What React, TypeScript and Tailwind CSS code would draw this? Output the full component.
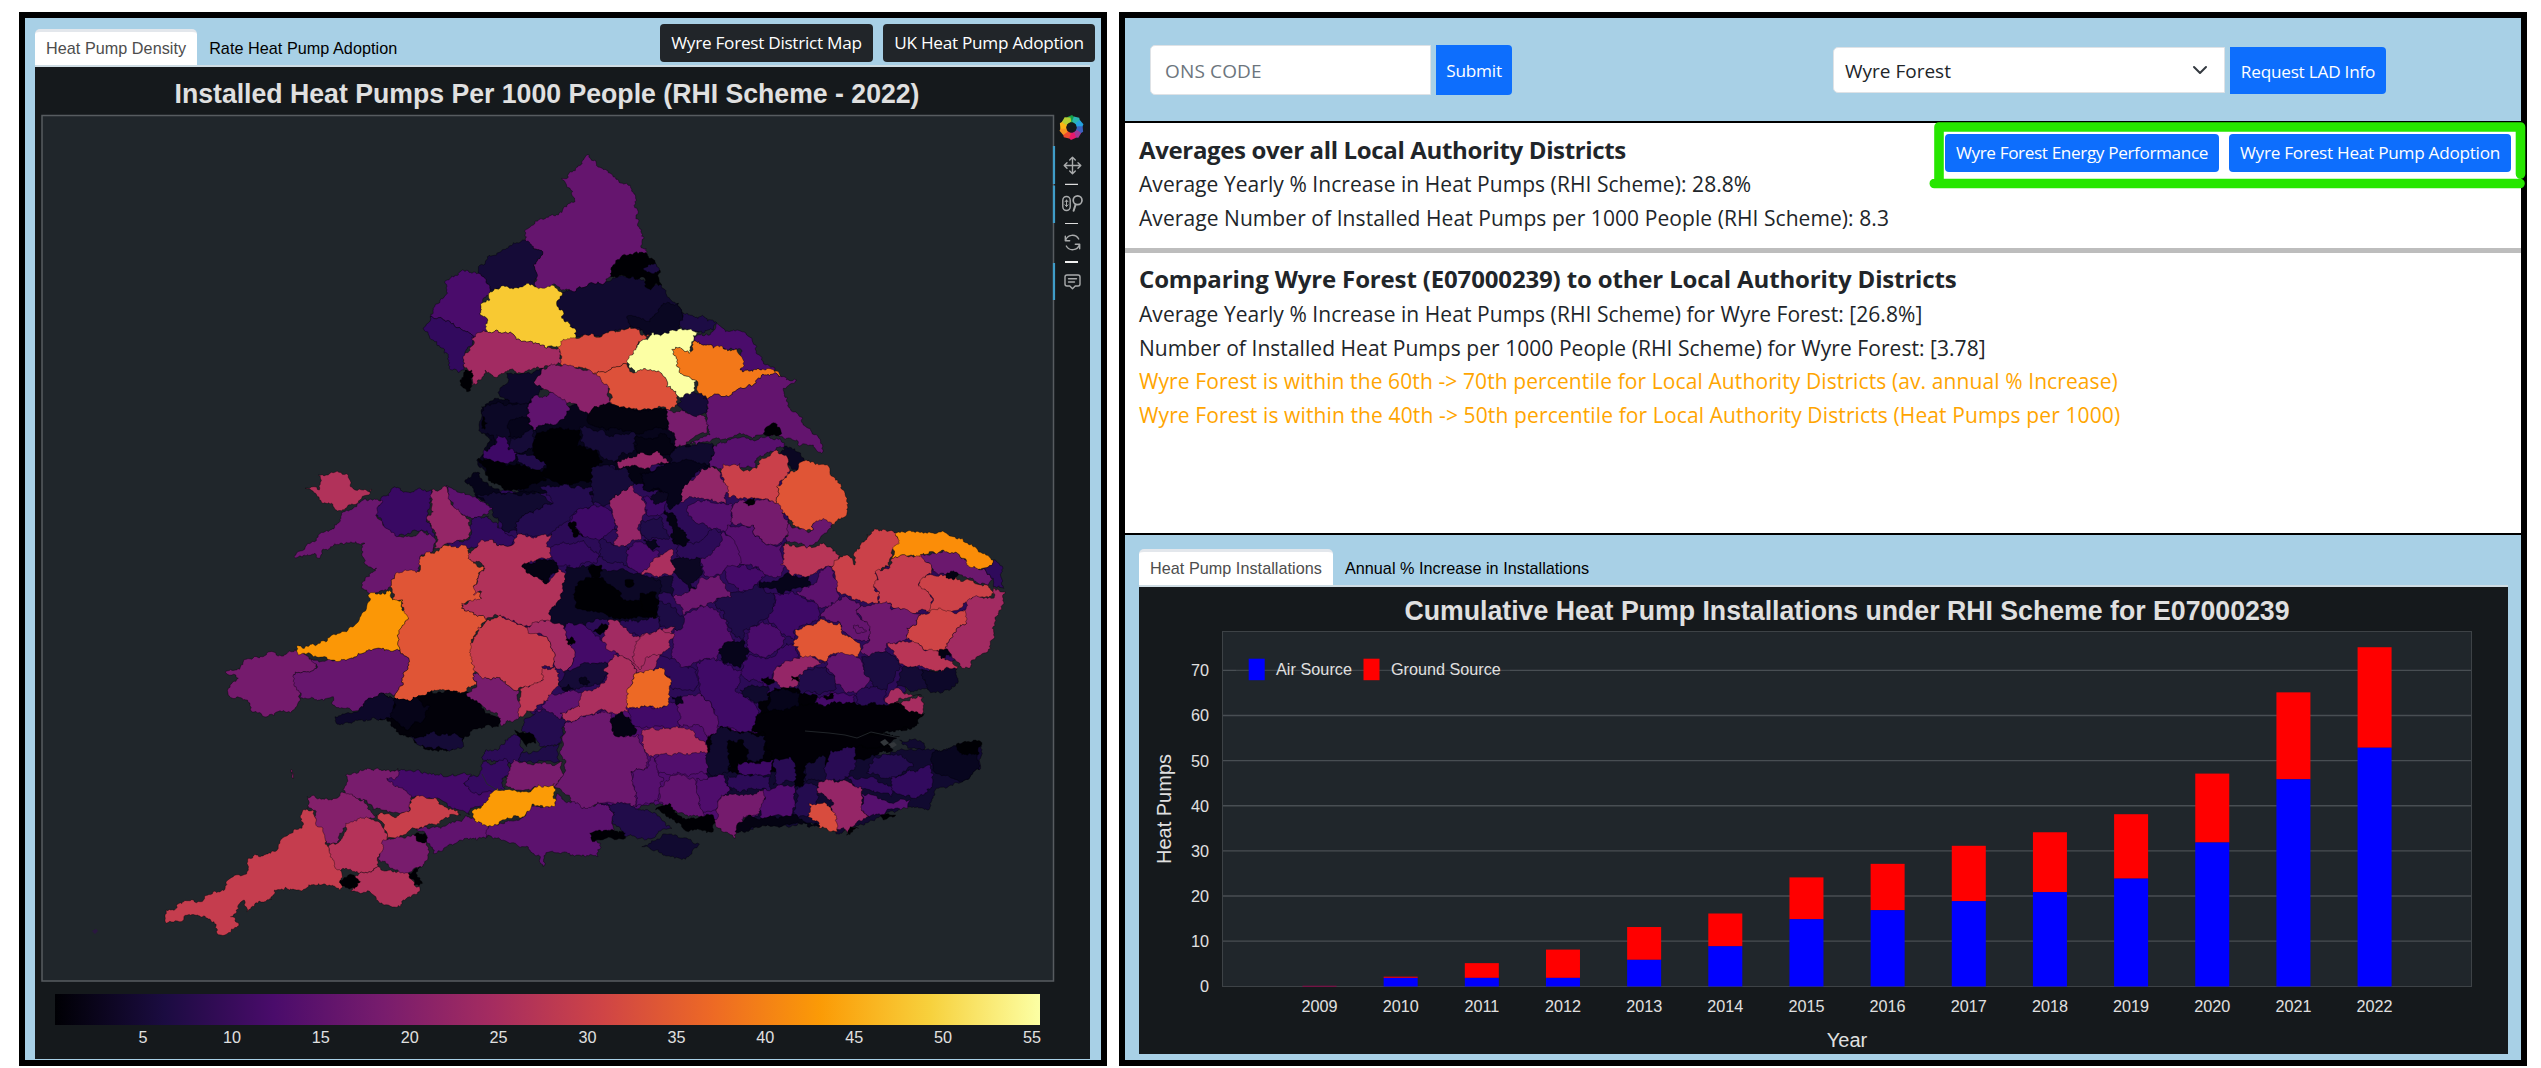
import React from "react";

type Pt = [number, number];

/* Each district is listed in the local grid of its map sheet. */
const sheets: Record<string, [number, number, number, number]> = {
  N: [400, 140, 1 / 3, 1 / 3],
  L: [280, 440, 1 / 3, 1 / 3],
  M: [640, 460, 1 / 3, 1 / 3],
  S: [140, 700, 1 / 1.8233, 1 / 3],
};

const districts = `
N #07051b 245,800 385,780 500,800 640,800 800,808 830,920 940,915 940,1000 900,1150 500,1150 420,1060 310,1045 260,1000 230,960 275,900 245,880
M #2c0b57 -440,100 -60,90 0,0 450,30 440,200 430,260 600,310 900,330 1000,420 950,600 840,640 730,760 600,800 200,850 -200,800 -330,755 -420,500
S #4f0d6c 775,70 1130,40 1200,340 1050,370 1020,345 960,320 800,310
S #110a30 1040,150 1100,90 1250,160 1290,140 1340,160 1400,150 1450,150 1530,130 1530,210 1500,245 1450,270 1440,325 1400,320 1300,380 1280,400 1200,370 1090,385 1130,340 1040,250
N #65156e 568,45 580,62 600,82 625,98 648,118 680,130 695,148 705,185 708,225 718,262 732,295 722,318 738,325 742,345 690,342 668,355 640,375 632,410 612,432 575,428 540,440 515,455 480,448 465,432 440,445 400,435 410,400 400,375 420,355 428,340 400,325 375,310 375,285 400,255 440,232 475,225 490,205 525,185 510,145 485,115 505,112 530,82 550,60
N #150b37 375,300 400,325 428,340 420,355 400,375 410,400 400,440 350,443 310,440 270,455 255,415 235,400 240,375 262,350 290,345 320,325 350,308
N #4a0c6b 235,400 255,415 270,455 245,490 240,520 262,545 262,572 220,592 190,572 160,550 130,540 90,530 100,505 135,468 135,430 155,408 200,390
N #320a5e 90,530 130,540 160,550 190,572 220,592 215,620 195,640 192,690 175,698 145,675 130,625 100,600 70,565
N #110a30 482,455 515,452 540,440 575,428 612,432 650,410 700,410 740,425 785,435 800,465 835,490 850,520 840,580 750,582 690,560 640,575 600,590 560,585 528,590 528,570 510,552 485,535 490,515 470,495
N #0a0722 680,530 750,545 790,490 835,490 850,520 840,580 750,582 690,562
N #1d0c45 845,520 900,530 950,548 940,570 880,575 840,560
N #000004 742,345 765,365 780,390 785,435 768,430 752,450 735,440 735,415 690,415 632,410 640,375 668,345 690,342
N #1b0c41 730,385 755,372 778,388 765,397 740,397
N #f8c932 270,455 310,437 350,443 385,430 410,442 455,435 482,455 470,495 490,515 485,535 510,552 528,570 528,590 490,600 480,625 440,625 400,612 360,600 325,580 262,575 262,545 240,520 245,490 270,480
N #4a0c6b 950,550 1000,570 1040,585 1070,620 1090,665 1125,690 1080,690 1020,690 1025,630 990,625 940,625 880,605 880,590 940,572
N #d84c3e 490,598 560,585 600,592 640,572 690,560 720,580 752,585 730,600 700,640 680,672 640,682 580,702 520,680 480,670 478,630
N #dd513a 680,672 705,698 740,690 785,700 800,740 830,765 835,795 810,812 790,800 740,808 690,812 625,795 635,765 620,740 580,702 640,682
N #f37819 880,605 940,625 1010,628 1025,650 1020,690 1080,690 1115,688 1145,710 1085,705 1060,735 1010,750 990,767 910,775 890,750 890,722 840,700 830,665 815,628 840,622 868,640
N #fcffa4 752,575 762,585 800,580 850,570 895,575 875,605 868,640 840,622 815,628 830,665 840,700 890,722 885,750 852,775 830,765 800,740 785,700 740,690 705,698 680,665 700,635 720,605 748,592
N #a22b62 262,575 325,580 360,600 400,612 440,625 480,630 482,670 430,685 370,700 315,695 285,712 255,690 240,720 215,735 205,690 192,680 195,640 220,615 215,592
N #000004 195,690 215,690 215,740 200,755 180,720
N #0d0829 320,700 375,700 430,685 405,722 430,745 400,770 380,795 340,790 300,770 300,745 325,725
N #0c0826 250,800 290,790 385,795 385,850 405,870 410,930 340,935 300,930 280,885 245,880
N #000004 248,830 262,850 255,868 245,865
N #06041a 330,840 385,835 400,870 370,905 325,890
N #8a226a 430,685 500,675 540,685 580,702 625,745 635,790 590,800 570,835 550,815 520,790 500,790 460,760 405,722
N #60136e 400,770 460,758 500,790 510,805 480,840 460,855 400,870 385,850 385,795
N #150b37 330,895 400,870 410,930 340,935 322,920
N #3e0966 290,885 315,890 325,930 352,940 345,960 310,975 250,960 255,930 280,915
N #210c4a 352,940 400,945 440,975 420,990 380,980 350,965
N #000004 410,880 470,865 540,870 530,920 590,930 608,965 585,985 580,1030 500,1030 420,1010 440,975 400,945
N #000004 235,955 260,960 320,978 350,970 420,990 440,1020 380,1045 310,1045 265,1010
N #04030f 590,800 700,805 800,812 800,870 705,880 600,865 560,840
N #150b37 540,860 600,870 640,890 705,880 705,930 650,960 610,960 590,930 540,900
N #040312 705,890 800,885 825,930 810,945 710,935
N #781c6d 800,808 840,815 900,822 920,830 920,880 870,900 830,922 825,890 805,870 800,835
N #150b37 850,770 880,755 905,760 925,790 920,820 870,822 832,795
N #63146e 910,775 990,767 1010,750 1060,735 1085,705 1145,710 1190,720 1150,745 1165,800 1210,855 1268,920 1265,940 1240,915 1200,918 1160,895 1130,885 1080,885 1050,890 1010,885 960,900 870,910 930,885 920,830 925,790
N #000004 1090,880 1100,860 1120,848 1140,865 1140,885
N #58106d 940,920 1000,895 1050,900 1100,890 1130,895 1155,920 1120,935 1070,955 1060,985 965,990 930,985
N #0a0722 1155,918 1190,935 1225,960 1195,990 1160,975 1140,940
N #100a2e 830,925 940,915 935,960 910,990 860,1005 815,985 810,945
N #952667 645,965 700,950 730,938 780,938 808,965 760,975 735,995 710,980 670,985
N #1f0c48 590,980 640,975 650,1030 650,1090 600,1090 575,1040
N #040312 665,985 720,985 790,990 850,1005 830,1050 760,1055 700,1030
N #06041a 195,1020 240,1000 280,1045 310,1060 420,1060 400,1075 230,1075
M #ca404a 250,12 300,10 305,30 350,25 365,-5 410,-30 430,-15 450,30 425,60 410,80 415,135 350,115 265,112 250,70
M #e05536 450,35 475,25 485,5 520,5 555,15 580,50 610,90 625,130 620,165 575,195 555,180 520,190 520,210 480,205 445,175 415,135 410,80 430,60
M #912668 150,60 205,22 240,35 265,80 258,132 200,118 120,125 130,85
M #06041a 60,20 150,0 205,20 150,60 130,85 120,125 90,150 60,90 10,90 0,40
M #56106e 150,135 200,118 270,130 278,180 255,215 215,210 170,190 140,155
M #751b6d 280,135 350,120 415,130 445,180 448,215 420,248 380,255 345,230 340,195 278,190
M #000004 310,128 345,113 345,125 325,138
M #550f6d 262,195 340,195 345,230 380,255 425,250 430,300 420,350 370,345 355,320 300,315 285,260 255,215
M #6a176e 450,190 480,208 520,210 520,190 560,180 575,195 540,235 500,265 440,245
M #b73557 435,248 500,265 540,250 575,265 600,285 590,315 560,320 510,348 450,350 422,315 430,290
M #cb4149 600,290 630,290 645,315 640,285 660,265 680,225 770,218 780,250 755,290 750,320 705,340 715,365 700,380 720,400 715,430 680,428 625,408 590,390 572,320
M #c43c4e 755,295 800,288 850,285 875,315 875,340 835,375 865,395 880,420 870,452 800,452 755,440 755,432 718,430 718,395 700,375 715,360 705,335 750,322
M #6b186e 845,282 920,275 960,290 1000,315 1030,325 1060,355 1045,375 1000,362 950,345 915,345 880,335 870,310
M #fb8d08 770,218 850,220 940,230 1000,260 1060,300 1030,325 1000,320 960,290 920,275 850,280 800,288 755,295 760,270 778,250
M #2f0a5b 1060,300 1085,330 1092,385 1060,380 1060,355 1030,325
M #cc4248 865,345 915,345 950,358 1000,362 1040,375 1070,400 1020,412 970,430 955,450 900,460 862,455 880,415 865,395 835,378
M #040312 918,345 940,332 955,345 940,360
M #a22b62 1060,385 1095,395 1092,430 1065,485 1052,565 1010,590 970,625 950,605 915,580 920,550 940,520 980,490 970,450 980,425 1020,412 1065,405
M #cf4446 835,465 870,455 940,458 975,450 980,490 940,520 920,550 905,575 850,570 835,550 795,535 800,505 830,490
M #b93556 740,550 790,543 835,550 850,570 900,575 915,600 955,620 930,628 860,625 800,620 775,605 760,580
M #040312 897,572 925,572 930,590 905,597
M #6f196e 665,435 750,430 755,450 840,460 830,490 800,505 795,540 740,550 735,575 690,590 660,570 690,540 690,510 665,480 650,450
M #65156e 545,460 590,420 620,410 660,430 650,455 665,480 690,500 690,540 640,540 605,510 600,488 540,475
M #65156e 640,497 668,503 680,513 650,520
M #5d126e 470,395 520,375 540,330 575,322 590,390 600,410 545,445 520,420
M #3e0966 370,470 405,425 400,400 460,395 520,425 540,460 535,480 500,490 460,515 465,545 440,530 410,500
M #06041a 360,362 430,350 505,348 512,375 460,385 430,405 400,385 360,385
M #1f0c48 230,415 300,395 350,370 405,410 400,440 365,480 310,510 310,540 285,530 265,500 255,460 230,445
M #550f6d 130,470 200,435 230,450 260,480 262,510 285,540 240,575 230,600 200,595 120,625 95,595 100,520
M #4a0c6b 320,520 370,485 400,500 430,545 400,580 360,590 320,560
M #3b0964 325,590 400,590 440,550 470,555 475,595 430,620 400,640 385,680 330,665 300,640
M #400a67 170,610 235,600 250,610 305,630 300,660 285,690 330,720 355,760 370,800 350,820 290,810 220,790 220,745 180,700
M #06041a 235,570 270,545 315,545 325,580 300,625 245,600
M #2f0a5b 25,600 50,580 95,595 120,620 170,630 165,690 100,690 90,650 25,630
M #5a116e 110,730 180,700 220,745 235,830 200,830 180,800 125,800 110,760
M #420a68 -35,750 60,742 110,735 120,760 120,800 80,805 0,800 -30,790
M #010006 355,740 370,700 440,680 530,705 530,765 600,765 660,740 700,760 850,765 820,800 740,800 690,820 740,830 760,870 600,900 560,930 450,930 200,930 200,840 240,800 350,820 370,800
M #e15635 510,495 540,478 600,488 605,520 660,550 655,590 620,590 580,580 555,605 530,595 485,600 475,560 455,555 475,530 465,510 480,508
M #952667 400,635 470,595 530,598 555,610 500,630 470,680 430,682 410,665
M #210c4a 475,650 500,630 555,620 585,650 585,690 540,705 480,700
M #64156e 560,605 610,580 660,595 690,660 660,700 620,700 585,660 560,625
M #1b0c41 665,590 740,575 785,620 765,650 740,690 710,705 690,660
M #140b35 785,625 850,630 865,690 820,695 770,680
M #0d0829 845,630 950,628 955,665 900,700 865,690
M #290b54 650,700 700,680 740,690 735,765 690,755 650,730
M #440a68 530,715 600,700 645,705 640,735 590,765 530,765
M #0a0722 600,750 640,735 680,750 670,790 620,785
M #000004 550,712 580,700 580,715 560,720
M #000004 365,655 385,650 405,665 385,675
M #000004 455,648 475,650 478,665 455,662
M #100a2e 300,690 385,680 385,720 350,730 310,710
M #06041a 390,700 430,685 480,700 480,740 440,765 385,750
M #a72d60 735,715 765,685 800,700 850,712 848,760 800,760 745,755
M #24292d 768,725 800,715 845,706 830,714 800,722 780,730
M #06041a 95,710 125,710 130,730 110,735
M #56106e 180,300 215,250 250,215 285,250 298,315 260,330 240,345 195,350
M #2c0b57 110,265 180,245 210,210 245,220 240,255 180,295 110,290
M #040312 75,150 100,160 130,210 150,240 130,260 100,250
M #0b0722 80,315 100,300 180,295 185,345 150,370 170,395 150,400 110,345
M #6d186e 100,410 170,385 180,355 240,348 275,410 230,415 200,435 130,465
M #450a69 255,325 290,320 350,320 375,345 340,380 300,395 265,370
M #110a30 0,350 100,350 100,410 20,400
M #1d0c45 50,420 90,430 130,470 120,510 60,500
M #1f0c48 5,180 60,170 90,230 30,240 0,210
M #07051b 10,240 50,240 60,260 30,270
M #3b0964 10,110 80,120 70,160 20,165
M #0b0722 30,115 60,95 85,105 70,125 40,130
L #b1325a 115,105 160,98 205,105 225,150 275,148 240,180 185,212 130,190 110,165 75,145 100,140 118,150
L #390963 305,170 345,140 375,155 455,150 450,200 440,240 465,290 430,272 350,292 320,270 285,225
L #6a176e 185,225 250,180 305,180 290,230 350,290 430,275 460,290 460,325 420,350 418,390 345,405 330,440 265,458 245,430 290,385 265,380 245,345 255,310 180,310 125,335 120,355 105,340 42,350 80,315 150,270
L #952667 455,150 500,140 510,180 545,215 570,245 570,290 540,300 495,312 460,328 465,285 440,230 460,215
L #5d126e 500,135 590,175 638,205 580,240 550,225 510,180
L #320a5e 500,310 570,295 575,245 625,228 665,265 705,295 690,318 640,300 570,325 520,328
L #110a30 590,165 640,155 780,160 820,190 760,220 710,245 715,280 670,270 640,230 638,205
L #240c4f 780,140 870,140 940,140 940,200 890,215 850,250 815,285 760,290 710,280 710,245 760,220 820,190
L #751b6d 45,628 105,660 110,685 40,705 60,740 60,775 40,810 0,812 -42,831 -84,816 -90,790 -150,770 -155,745 -125,715 -165,696 -130,690 -110,665 -70,650 -40,640 0,645
L #67166e 40,705 110,685 95,658 185,658 235,640 300,625 360,630 388,660 370,735 345,765 310,760 265,775 235,812 190,805 155,790 160,770 120,780 60,775
L #e05536 420,350 480,325 560,320 565,355 615,382 580,440 605,455 605,475 545,495 545,505 620,540 575,610 580,700 590,735 555,755 520,760 455,752 410,772 345,775 345,765 370,735 388,660 360,630 365,560 385,535 365,500 368,480 340,480 330,440 345,405 418,395
L #fb9706 268,462 330,450 338,480 368,480 365,510 385,535 365,560 360,630 300,625 235,640 185,658 100,650 55,645 50,620 110,615 150,590 200,575 235,545 260,500
L #020109 310,760 345,775 410,772 455,752 560,755 600,790 615,820 665,830 655,860 620,855 560,890 545,915 430,925 390,890 360,885 320,835 285,835
L #0d0829 165,830 210,820 250,800 265,775 310,760 345,775 330,835 285,835 215,850 180,855
L #060418 345,775 410,772 450,800 430,840 380,870 330,830
L #150b37 390,890 440,880 500,880 550,895 545,925 460,928 415,915
L #781c6d 590,735 580,700 620,715 650,712 715,750 718,830 665,858 655,830 610,800 600,790 560,760
L #c43c4e 620,540 655,525 690,540 735,560 800,590 825,650 820,680 785,680 790,720 715,750 650,712 620,715 580,690 570,630 580,590
L #b1325a 565,340 600,305 640,300 690,318 710,285 760,295 815,285 800,320 815,350 780,355 730,380 755,405 800,430 825,390 860,410 850,450 840,500 805,545 730,558 690,540 650,525 620,540 545,505 545,490 605,475 605,455 580,465 580,440 615,385 565,355
L #040312 725,380 780,358 825,355 835,385 800,432 745,400
L #0c0826 820,500 850,450 860,400 860,380 930,375 1070,400 1140,420 1140,540 1100,595 1020,550 960,540 900,560 805,552
L #a22b62 735,560 800,540 850,555 860,590 885,650 860,695 825,680 825,650 800,590 745,580
L #bd3853 790,685 825,680 840,700 830,740 805,780 765,808 740,812 718,832 720,750 790,720
L #440a68 855,550 900,550 940,580 970,600 1010,635 985,670 900,680 860,695 885,650 870,600
L #150b37 850,695 900,680 985,672 985,700 970,725 920,740 860,755 835,735
L #5f136e 805,765 880,750 915,775 900,800 860,815 840,845 770,815
L #a22b62 965,600 985,540 1010,540 1060,590 1140,570 1185,560 1150,620 1120,690 1070,700 1030,650 995,635
L #ab2f5e 840,820 900,800 915,750 970,730 985,700 970,690 1000,645 1030,650 1070,700 1045,745 1045,815 1000,820 970,810 930,825 880,845 845,850
L #3e0966 890,210 940,195 980,205 1010,230 1010,270 960,300 910,290 870,250
L #000004 865,250 885,245 910,290 880,290
L #350a60 815,320 850,305 910,300 955,340 950,370 880,385 830,375
L #160b39 940,80 1000,80 1050,100 1060,135 1030,150 990,190 940,190
L #952667 990,190 1030,150 1060,135 1085,180 1098,220 1075,260 1080,300 1050,310 1030,325 1000,315 1015,290 1005,240
L #240c4f 960,300 1015,320 1070,340 1060,380 1000,370 955,350
L #480b6a 1040,330 1080,305 1130,330 1140,370 1085,400 1050,385
L #ab2f5e 1085,405 1110,370 1180,330 1180,400 1130,408
L #000004 885,440 950,410 1000,440 1030,480 1110,470 1130,500 1130,535 1010,535 950,515 890,505
L #000004 930,380 965,375 960,410 935,410
L #000004 1035,420 1060,420 1055,440 1035,435
L #000004 1080,460 1130,460 1130,525 1090,510
L #290b54 1020,545 1140,530 1130,575 1080,592
L #000004 940,575 965,550 985,560 960,585
L #000004 857,600 875,590 885,610 865,615
L #06041a 845,745 865,732 880,745 855,755
L #06041a 897,722 915,710 930,728 910,735
M #a72d60 -20,600 0,530 60,505 105,525 70,575 20,590 0,630
M #ed6925 -35,685 -10,640 30,628 75,632 95,665 85,725 60,742 0,745 -35,745
S #6c186e 775,70 820,45 860,40 870,100 910,105 925,170 925,205 895,215 905,300 905,320 870,315 840,310 805,330 780,285 755,260 775,215 768,150
S #040312 860,55 880,35 895,60 905,95 870,110 860,90
S #240c4f 695,90 700,60 720,35 745,35 775,60 768,130 730,140 715,115
S #2c0b57 625,180 630,150 690,105 700,150 690,185
S #1f0c48 695,160 765,130 765,185 720,190 690,180
S #000004 683,90 695,98 718,105 722,130 705,140 695,118
S #350a60 585,250 620,220 625,185 670,180 678,210 660,235 665,265 620,285 600,280
S #781c6d 665,230 680,180 720,190 770,185 770,230 755,260 690,270 665,260
S #440a68 450,235 465,212 510,212 560,230 605,225 590,250 620,285 665,270 610,320 600,345 560,310 530,295 495,290 455,255
S #781c6d 370,270 375,225 400,212 470,205 470,230 450,235 465,260 495,290 490,335 425,330 410,300 375,290
S #84206b 305,290 350,300 372,278 410,300 420,330 430,350 400,360 370,385 360,430 340,430 315,380 320,340 305,325
S #c53d4e 297,330 315,330 320,370 335,400 345,450 365,500 365,570 330,555 265,562 245,570 240,600 210,610 195,635 190,600 180,625 165,650 180,670 155,705 140,700 135,665 100,645 80,650 75,665 48,670 48,630 85,602 110,605 150,570 170,530 195,515 197,475 215,465 250,450 255,430 295,385
S #b53359 375,370 400,355 435,365 450,400 450,420 435,470 435,500 400,520 360,510 345,455 345,435 360,430
S #b1325a 400,520 435,500 460,515 490,510 500,555 510,560 480,600 475,620 445,615 430,590 385,575
S #000004 365,540 380,525 402,545 385,565
S #781c6d 440,430 470,405 505,405 525,440 525,475 510,500 485,518 460,505 435,480
S #60136e 500,385 540,380 600,350 635,375 630,415 570,435 535,460 525,430 520,400
S #c83f4b 430,345 490,335 500,295 540,295 555,320 585,345 540,375 500,385 480,405 450,415 445,380
S #000004 500,405 520,400 522,425 508,425
S #000004 490,520 512,500 505,530 515,550 500,555
S #5c126e 635,380 700,350 705,315 735,322 755,315 760,280 805,325 840,310 865,345 860,365 865,390 825,405 840,430 835,470 800,465 740,458 735,500 730,470 700,440 650,415 630,412
S #fb9b06 605,335 635,300 652,265 700,275 755,250 755,320 735,322 715,312 700,350 660,360 630,375 610,362
S #210c4a 840,310 900,320 940,340 970,385 920,420 880,400 860,370 865,345
S #000004 820,400 850,390 885,400 885,415 825,425
S #110a30 915,440 965,402 1020,432 1000,470 975,475 945,450
S #56106e 895,215 925,205 935,170 945,190 945,225 955,240 945,300 905,320
S #60136e 950,260 965,235 1010,235 1025,355 1000,350 975,330 945,305
S #520e6d 945,160 1035,160 1035,220 1000,230 945,220
S #ab2f5e 915,92 960,85 1010,95 1030,125 1035,158 985,158 935,170 918,140
S #100a2e 1035,160 1040,110 1060,80 1100,100 1140,110 1140,180 1080,190 1070,220 1038,220
S #010006 1130,40 1270,10 1430,40 1420,70 1380,90 1320,100 1385,110 1360,140 1300,140 1250,180 1210,200 1210,260 1195,260 1190,200 1150,170 1140,100 1115,95
S #000004 1070,125 1100,120 1110,160 1090,205 1072,200
S #4f0d6c 1015,235 1065,225 1080,270 1060,290 1050,330 1025,330
S #000004 940,330 965,310 980,345 1020,350 1045,345 1045,395 1000,395 960,350
S #751b6d 1060,285 1140,270 1130,340 1100,350 1085,415 1050,380 1050,330
S #4f0d6c 1140,265 1195,255 1190,350 1130,350
S #3e0966 1090,190 1155,180 1150,225 1090,220
S #2c0b57 1070,230 1150,230 1150,270 1080,265
S #290b54 1155,180 1185,170 1195,240 1155,255
S #240c4f 1200,260 1240,250 1235,300 1215,350 1192,345
S #150b37 1215,190 1245,165 1255,245 1215,245
S #290b54 1250,240 1260,150 1300,140 1305,200 1280,240
S #240c4f 1325,220 1340,170 1385,165 1410,200 1370,235
S #2f0a5b 1285,230 1340,235 1375,260 1370,290 1310,270
S #320a5e 1370,230 1445,190 1445,260 1410,295 1370,270
S #56106e 1315,280 1350,295 1405,300 1400,325 1350,345 1330,350 1315,330
S #952667 1240,245 1275,245 1315,260 1315,330 1330,350 1300,380 1290,400 1265,375 1265,310 1235,280
S #d84c3e 1220,310 1245,310 1270,350 1272,395 1240,385 1218,350
S #040312 1090,370 1110,345 1200,350 1240,380 1180,372 1085,395
S #000004 1288,405 1295,380 1310,385
S #000004 1350,345 1378,345 1355,360
S #08061f 1445,190 1450,150 1490,140 1530,160 1530,210 1500,245 1445,210
S #000004 1488,138 1535,128 1530,158 1495,158
S #110a30 1385,120 1410,118 1430,135 1430,148 1400,145
S #8a226a 276,208 280,235 277,228
`;

const noise = (a: Pt, b: Pt) => {
  const s = Math.sin((a[0] + b[0]) * 12.9898 + (a[1] + b[1]) * 78.233) * 43758.5453;
  return (s - Math.floor(s)) * 2 - 1;
};

/* Breaks a straight border into an irregular one; the result is the same in either direction. */
const roughen = (a: Pt, b: Pt, out: Pt[]) => {
  const flip = a[0] > b[0] || (a[0] === b[0] && a[1] > b[1]);
  const [p, q] = flip ? [b, a] : [a, b];
  const dx = q[0] - p[0];
  const dy = q[1] - p[1];
  const len = Math.hypot(dx, dy);
  if (len < 2.4) {
    out.push(b);
    return;
  }
  const k = noise(p, q) * Math.min(0.34, 1.6 / len + 0.05);
  const mid: Pt = [(p[0] + q[0]) / 2 - dy * k, (p[1] + q[1]) / 2 + dx * k];
  roughen(a, mid, out);
  roughen(mid, b, out);
};

const shapes = districts
  .trim()
  .split("\n")
  .map((line) => {
    const [sheet, fill, ...rest] = line.trim().split(" ");
    const [ox, oy, sx, sy] = sheets[sheet];
    const pts = rest.map((p) => {
      const [x, y] = p.split(",").map(Number);
      return [ox + x * sx, oy + y * sy] as Pt;
    });
    const out: Pt[] = [];
    pts.forEach((p, i) => roughen(p, pts[(i + 1) % pts.length], out));
    return { fill, d: "M" + out.map((p) => p[0].toFixed(1) + " " + p[1].toFixed(1)).join("L") + "Z" };
  });

const inferno = ["#000004", "#1b0c41", "#4a0c6b", "#781c6d", "#a52c60", "#cf4446", "#ed6925", "#fb9b06", "#f7d13d", "#fcffa4"];
const logoColors = ["#17a04a", "#2bb5b0", "#25a2e0", "#3c62c0", "#a03a97", "#e8186c", "#ee4b2f", "#f79420", "#fbb415", "#b5cf34"];

function MapPlot() {
  return (
    <svg viewBox="35 67 1055 992" className="block h-[992px] w-[1055px] bg-[#15191c] font-['Liberation_Sans',Arial,sans-serif]">
      <defs>
        <linearGradient id="inferno">
          {inferno.map((c, i) => (
            <stop key={c} offset={i / 9} stopColor={c} />
          ))}
        </linearGradient>
      </defs>
      <text x="547" y="103.2" textAnchor="middle" fontWeight="700" fontSize="27" textLength="745" lengthAdjust="spacingAndGlyphs" fill="#e0e0e0">
        Installed Heat Pumps Per 1000 People (RHI Scheme - 2022)
      </text>
      <rect x="42" y="115.5" width="1011.5" height="865.5" fill="#20262b" stroke="#575c60" strokeWidth="1.5" />
      <g stroke="#000004" strokeOpacity="0.5" strokeWidth="0.7" strokeLinejoin="round">
        {shapes.map((s, i) => (
          <path key={i} d={s.d} fill={s.fill} />
        ))}
      </g>
      <g fill="none" stroke="#24282c" strokeWidth="0.9">
        <path d="M805 731L829 733L845 735L857 738L871 732L885 735L900 738" />
        <path d="M482 774L487 784L497 790L512 789" />
      </g>
      <path d="M880 742l5 -3l4 4l-5 3zm8 2l6 -2l3 3l-5 3z" fill="#33373b" />
      <path d="M92 931l4 -2l2 2l-3 3z" fill="#2a1740" />

      <rect x="55" y="994" width="985" height="31" fill="url(#inferno)" />
      <g fill="#e0e0e0" fontSize="16.2" textAnchor="middle">
        {[5, 10, 15, 20, 25, 30, 35, 40, 45, 50, 55].map((v) => (
          <text key={v} x={54.1 + v * 17.78} y="1043">
            {v}
          </text>
        ))}
      </g>

      <g transform="translate(1071.5 127.5)">
        {logoColors.map((c, i) => (
          <path key={c} d="M-4.5 -10.2L0.5 -12.4L5 -8.6L3.4 -5L-3 -5.2Z" fill={c} transform={`rotate(${i * 36})`} />
        ))}
        <circle r="4.8" fill="#15191c" />
      </g>
      <g stroke="#3f9cc8" strokeWidth="2.2">
        <path d="M1054 146V184M1054 185.5V223M1054 263V300" />
      </g>
      <path d="M1065 184.3h13M1065 223.5h13" stroke="#dcdcdc" strokeWidth="1.2" />
      <path d="M1065 262h13" stroke="#f0f0f0" strokeWidth="2" />
      <g fill="none" stroke="#a9abac" strokeWidth="1.4" strokeLinecap="round" strokeLinejoin="round">
        <path d="M1072.5 157.5v16M1064.5 165.5h16M1069.7 160l2.8 -2.8l2.8 2.8M1069.7 171l2.8 2.8l2.8 -2.8M1067 162.7l-2.8 2.8l2.8 2.8M1078 162.7l2.8 2.8l-2.8 2.8" />
        <rect x="1062.8" y="196.5" width="7.4" height="14" rx="3.7" />
        <path d="M1066.5 200v6.5M1065 201.8l1.5 -1.8l1.5 1.8M1065 204.8l1.5 1.8l1.5 -1.8" strokeWidth="1" />
        <circle cx="1077.6" cy="200.3" r="4.4" strokeWidth="1.7" />
        <path d="M1075.6 204.6l-2 6.2" strokeWidth="2" />
        <path d="M1065.5 240.5a7.2 7.2 0 0 1 13.2 -1.5M1065.3 236.3v4.4h4.4M1079.5 244.5a7.2 7.2 0 0 1 -13.2 1.5M1079.7 248.7v-4.4h-4.4" />
        <path d="M1067 275h11a2 2 0 0 1 2 2v7a2 2 0 0 1 -2 2h-2.8l-2.7 2.7l-2.7 -2.7h-2.8a2 2 0 0 1 -2 -2v-7a2 2 0 0 1 2 -2zM1068.5 278.8h8M1068.5 282h6" />
      </g>
    </svg>
  );
}

const yearly: [number, number, number][] = [
  [2009, 0, 0], [2010, 2, 2], [2011, 2, 5], [2012, 2, 8], [2013, 6, 13], [2014, 9, 16], [2015, 15, 24],
  [2016, 17, 27], [2017, 19, 31], [2018, 21, 34], [2019, 24, 38], [2020, 32, 47], [2021, 46, 65], [2022, 53, 75],
];
const yOf = (v: number) => 986.3 - v * 4.513;

function InstallChart() {
  return (
    <svg viewBox="1139 587 1369 467" className="block h-[467px] w-[1369px] bg-[#15191c] font-['Liberation_Sans',Arial,sans-serif]">
      <text x="1847" y="620" textAnchor="middle" fontWeight="700" fontSize="27" textLength="885" lengthAdjust="spacingAndGlyphs" fill="#e0e0e0">
        Cumulative Heat Pump Installations under RHI Scheme for E07000239
      </text>
      <rect x="1222.5" y="631.5" width="1249" height="355" fill="#20262b" stroke="#3d4246" />
      <g stroke="#484e53" strokeWidth="1.4">
        {[10, 20, 30, 40, 50, 60, 70].map((v) => (
          <path key={v} d={`M1223 ${yOf(v)}H2471`} />
        ))}
      </g>
      <g fill="#e0e0e0" fontSize="16.2" textAnchor="end">
        {[0, 10, 20, 30, 40, 50, 60, 70].map((v) => (
          <text key={v} x="1209" y={yOf(v) + 5.9}>
            {v}
          </text>
        ))}
      </g>
      {yearly.map(([year, air, total], i) => {
        const cx = 1319.5 + i * 81.16;
        return (
          <g key={year}>
            <rect x={cx - 17} y={yOf(total) - 0.6} width="34" height={(total - air) * 4.513 + 1.2} fill={total ? "#ff0000" : "#7a1045"} />
            <rect x={cx - 17} y={yOf(air) + 0.6} width="34" height={air ? air * 4.513 - 0.4 : 0} fill="#0000ff" />
            <text x={cx} y="1012" textAnchor="middle" fontSize="16.2" fill="#e0e0e0">
              {year}
            </text>
          </g>
        );
      })}
      <rect x="1236" y="646" width="274" height="47" fill="#20262b" fillOpacity="0.25" />
      <rect x="1248.7" y="658.7" width="16" height="21.5" fill="#0000ff" />
      <rect x="1363.5" y="658.7" width="16" height="21.5" fill="#ff0000" />
      <g fill="#e0e0e0" fontSize="16.2">
        <text x="1276" y="675" textLength="76">Air Source</text>
        <text x="1391" y="675">Ground Source</text>
      </g>
      <g fill="#e0e0e0" fontSize="20" textAnchor="middle">
        <text x="1847" y="1046.5">Year</text>
        <text transform="translate(1170.5 809) rotate(-90)">Heat Pumps</text>
      </g>
    </svg>
  );
}

/* Tab label row shared by both plots. */
function Tabs({ active, other }: { active: string; other: string }) {
  return (
    <div className="flex h-full items-end font-['Liberation_Sans',Arial,sans-serif] text-[16.2px] leading-[20px] tracking-[0.04px] whitespace-nowrap">
      <div className="h-9 rounded-t-[5px] border-t-[3px] border-[#e3e7ec] bg-white px-[11px] pt-[6px] text-[#4d4d4d]">{active}</div>
      <div className="h-9 px-[12px] pt-[9px] text-black">{other}</div>
    </div>
  );
}

export default function App() {
  return (
    <div className="flex h-[1068px] w-[2541px] gap-3 overflow-hidden bg-white pt-3 pl-[19px] font-['Open_Sans','Noto_Sans',sans-serif] text-[#212529]">
      <section className="h-[1054px] w-[1088px] border-6 border-black bg-[#a8d0e6]">
        <div className="flex h-[47px] items-start justify-between pr-[6px] pl-[10px]">
          <Tabs active="Heat Pump Density" other="Rate Heat Pump Adoption" />
          <div className="mt-[6px] flex gap-[10px] text-[17.2px] tracking-[-0.28px] whitespace-nowrap text-white">
            <button className="h-[38px] w-[213px] rounded-[4px] bg-[#212529]">Wyre Forest District Map</button>
            <button className="h-[38px] w-[212px] rounded-[4px] bg-[#212529]">UK Heat Pump Adoption</button>
          </div>
        </div>
        <div className="mr-[11px] ml-[10px] border-t-2 border-[#cfdde4]">
          <MapPlot />
        </div>
      </section>

      <section className="flex h-[1054px] w-[1408px] flex-col border-6 border-black bg-[#a8d0e6]">
        <div className="flex h-[105px] items-start justify-between border-b-2 border-black pr-[135px] pl-[25px] whitespace-nowrap">
          <div className="mt-[27px] flex gap-[5px]">
            <div className="flex h-[50px] w-[281px] items-center rounded-l-[5px] border border-[#dee2e6] bg-white px-[14px] pt-[2px] text-[19px] tracking-[0.15px] text-[#6c757d]">ONS CODE</div>
            <button className="h-[50px] w-[76px] rounded-r-[4px] bg-[#0d6efd] pt-[2px] text-[17.2px] tracking-[-0.2px] text-white">Submit</button>
          </div>
          <div className="mt-[29px] flex gap-[5px]">
            <div className="flex h-[46px] w-[392px] items-center justify-between rounded-l-[5px] border border-[#dee2e6] bg-white pr-[16px] pl-[11px] text-[19px]">
              <span className="pt-[2px]">Wyre Forest</span>
              <svg viewBox="0 0 16 16" className="h-4 w-4" fill="none" stroke="#343a40" strokeWidth="2" strokeLinecap="round" strokeLinejoin="round">
                <path d="M2 5l6 6l6 -6" />
              </svg>
            </div>
            <button className="h-[47px] w-[156px] rounded-r-[4px] bg-[#0d6efd] pt-[2px] text-[17.2px] tracking-[-0.23px] text-white">Request LAD Info</button>
          </div>
        </div>

        <div className="relative h-[412px] border-b-2 border-black bg-white whitespace-nowrap">
          <div className="h-[125px] pt-[9px] pl-[14px] text-[21px] leading-[33.5px]">
            <h2 className="text-[24px] leading-[36px] font-bold tracking-[-0.35px]">Averages over all Local Authority Districts</h2>
            <p className="tracking-[0.06px]">Average Yearly % Increase in Heat Pumps (RHI Scheme): 28.8%</p>
            <p className="tracking-[0.07px]">Average Number of Installed Heat Pumps per 1000 People (RHI Scheme): 8.3</p>
          </div>
          <div className="h-[5px] bg-[#bdbdbd]" />
          <div className="pt-[8px] pl-[14px] text-[21px] leading-[33.5px]">
            <h2 className="mb-px text-[24px] leading-[36px] font-bold tracking-[-0.15px]">Comparing Wyre Forest (E07000239) to other Local Authority Districts</h2>
            <p className="tracking-[0.06px]">Average Yearly % Increase in Heat Pumps (RHI Scheme) for Wyre Forest: [26.8%]</p>
            <p className="tracking-[0.05px]">Number of Installed Heat Pumps per 1000 People (RHI Scheme) for Wyre Forest: [3.78]</p>
            <p className="tracking-[0.1px] text-[#ffa500]">Wyre Forest is within the 60th -&gt; 70th percentile for Local Authority Districts (av. annual % Increase)</p>
            <p className="tracking-[0.12px] text-[#ffa500]">Wyre Forest is within the 40th -&gt; 50th percentile for Local Authority Districts (Heat Pumps per 1000)</p>
          </div>
          <div className="absolute top-[11px] right-[10px] flex gap-[10px] text-[17.2px] text-white">
            <button className="h-[38px] w-[274px] rounded-[4px] bg-[#0d6efd] tracking-[-0.38px]">Wyre Forest Energy Performance</button>
            <button className="h-[38px] w-[282px] rounded-[4px] bg-[#0d6efd] tracking-[-0.27px]">Wyre Forest Heat Pump Adoption</button>
          </div>
          <svg viewBox="1929 120 600 72" className="absolute -top-[3px] left-[804px] h-[72px] w-[600px]" fill="none" stroke="#26e600" strokeWidth="9.6" strokeLinecap="round" strokeLinejoin="round">
            <path d="M1939 183V127H2520.5V174M1934.3 183.5H2520" />
          </svg>
        </div>

        <div className="h-[50px] pl-[14px]">
          <Tabs active="Heat Pump Installations" other="Annual % Increase in Installations" />
        </div>
        <div className="ml-[14px] w-[1369px] border-t-2 border-[#cfdde4]">
          <InstallChart />
        </div>
      </section>
    </div>
  );
}
